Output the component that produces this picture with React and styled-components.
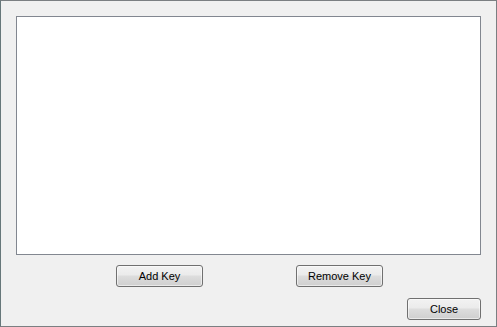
import styled, { createGlobalStyle } from "styled-components";

const GlobalStyle = createGlobalStyle`
  html, body {
    margin: 0;
    padding: 0;
    background: #f0f0f0;
  }
  * {
    box-sizing: border-box;
  }
`;

const Window = styled.div`
  width: 497px;
  height: 327px;
  background: #f0f0f0;
  border: 1px solid #7b7f82;
  border-left-color: #66777a;
  padding: 15px 15px 0 15px;
  display: flex;
  flex-direction: column;
  font-family: "Liberation Sans", Arial, sans-serif;
  font-size: 11px;
  color: #000;
`;

const KeyList = styled.div`
  height: 239px;
  background: #fff;
  border: 1px solid #828790;
`;

const ButtonRow = styled.div`
  display: flex;
  justify-content: center;
  gap: 93px;
  margin-top: 10px;
  padding-left: 2px;
`;

const Footer = styled.div`
  display: flex;
  justify-content: flex-end;
  margin-top: 11px;
`;

const Button = styled.button`
  width: ${(p) => p.$width}px;
  height: 22px;
  padding: 0;
  border: 1px solid #707070;
  border-radius: 3px;
  background: linear-gradient(
    to bottom,
    #f2f2f2 0%,
    #ebebeb 45%,
    #dddddd 50%,
    #cfcfcf 100%
  );
  box-shadow: inset 0 0 0 1px rgba(255, 255, 255, 0.55);
  font-family: "Liberation Sans", Arial, sans-serif;
  font-size: 11px;
  color: #000;
  cursor: default;
`;

export default function App() {
  return (
    <>
      <GlobalStyle />
      <Window>
        <KeyList />
        <ButtonRow>
          <Button $width={87}>Add Key</Button>
          <Button $width={87}>Remove Key</Button>
        </ButtonRow>
        <Footer>
          <Button $width={74}>Close</Button>
        </Footer>
      </Window>
    </>
  );
}
